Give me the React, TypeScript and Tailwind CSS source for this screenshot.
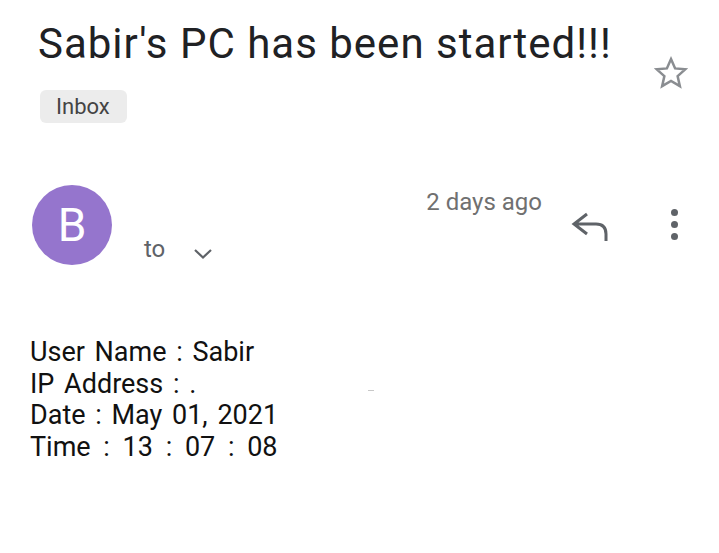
import React from "react";

const font = { fontFamily: "Roboto, 'Noto Sans', sans-serif" };

function Star() {
  return (
    <svg width="40" height="38" viewBox="0 0 24 24" className="block">
      <path
        d="M12 3.2l2.6 5.9 6.4.6-4.8 4.3 1.4 6.3L12 17l-5.6 3.3 1.4-6.3L3 9.7l6.4-.6z"
        fill="none"
        stroke="#8a8d91"
        strokeWidth="1.6"
        strokeLinejoin="miter"
      />
    </svg>
  );
}

function Reply() {
  return (
    <svg width="40" height="32" viewBox="0 0 40 32" className="block">
      <path
        d="M17 3 L4 13 L17 23 M4 13 H26 Q36 13 36 23 V30"
        fill="none"
        stroke="#5f6368"
        strokeWidth="3"
        strokeLinejoin="miter"
      />
    </svg>
  );
}

function Chevron() {
  return (
    <svg width="20" height="12" viewBox="0 0 20 12" className="block">
      <path d="M2 2 L10 9.5 L18 2" fill="none" stroke="#5f6368" strokeWidth="2.2" />
    </svg>
  );
}

function Dots() {
  return (
    <div className="flex flex-col items-center gap-[5px] w-[24px]">
      <span className="w-[7px] h-[7px] rounded-full bg-[#5f6368]" />
      <span className="w-[7px] h-[7px] rounded-full bg-[#5f6368]" />
      <span className="w-[7px] h-[7px] rounded-full bg-[#5f6368]" />
    </div>
  );
}

export default function App() {
  return (
    <div className="w-[719px] h-[553px] bg-white overflow-hidden text-[#202124]" style={font}>
      {/* Header */}
      <div className="flex justify-between pl-[38px] pr-[28px] pt-[19px]">
        <div className="flex flex-col items-start">
          <h1 className="text-[42px] leading-[50px] tracking-[1px] text-[#202124] font-normal">
            Sabir's PC has been started!!!
          </h1>
          <div className="mt-[21px] ml-[2px] w-[87px] h-[33px] rounded-[6px] bg-[#ececec] flex items-center pl-[16px] text-[22px] text-[#444]">
            Inbox
          </div>
        </div>
        <div className="mt-[35px]">
          <Star />
        </div>
      </div>

      {/* Sender row */}
      <div className="flex items-start mt-[62px] pl-[32px] pr-[33px]">
        <div className="w-[80px] h-[80px] rounded-full bg-[#9575cd] flex items-center justify-center text-white text-[46px] leading-none">
          B
        </div>
        <div className="flex items-start mt-[50px] ml-[32px]">
          <span className="text-[24px] leading-[28px] text-[#5f6368]">to</span>
          <div className="ml-[28px] mt-[13px]">
            <Chevron />
          </div>
        </div>
        <div className="flex-1" />
        <span className="mt-[3px] text-[24px] leading-[28px] text-[#707070]">2 days ago</span>
        <div className="ml-[28px] mt-[26px]">
          <Reply />
        </div>
        <div className="ml-[52px] mt-[24px]">
          <Dots />
        </div>
      </div>

      {/* Body */}
      <div className="mt-[72px] pl-[30px] text-[27px] leading-[31.5px] [word-spacing:3px] text-[#111]">
        <p>User Name : Sabir</p>
        <p className="flex items-center">
          <span>IP Address : .</span>
          <span className="ml-[172px] mt-[12px] w-[6px] h-[1px] bg-[#c8c8c8]" />
        </p>
        <p>Date : May 01, 2021</p>
        <p className="[word-spacing:6px]">Time : 13 : 07 : 08</p>
      </div>
    </div>
  );
}
